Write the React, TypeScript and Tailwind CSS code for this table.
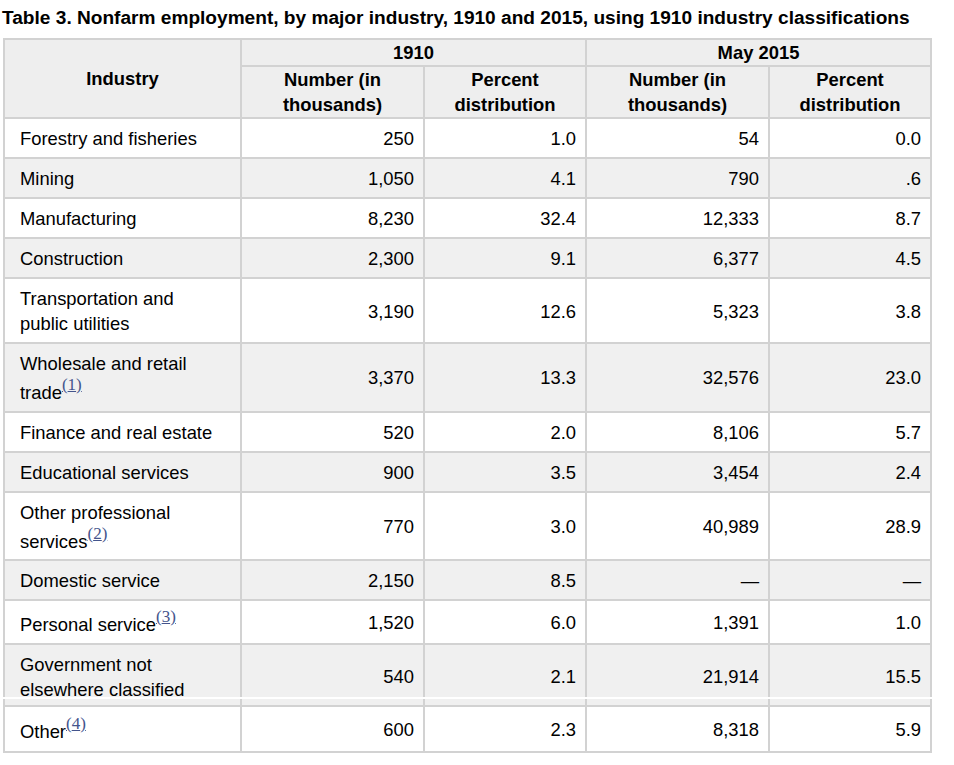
import type { ReactNode } from "react";

type Row = {
  name: ReactNode;
  n1910: string;
  p1910: string;
  n2015: string;
  p2015: string;
};

const Note = ({ n }: { n: number }) => (
  <sup
    className="text-[17px] leading-[18px] top-0 align-[0.5em] text-[#44548c] underline"
    style={{ fontFamily: '"Liberation Serif", serif' }}
  >
    ({n})
  </sup>
);

const rows: Row[] = [
  { name: "Forestry and fisheries", n1910: "250", p1910: "1.0", n2015: "54", p2015: "0.0" },
  { name: "Mining", n1910: "1,050", p1910: "4.1", n2015: "790", p2015: ".6" },
  { name: "Manufacturing", n1910: "8,230", p1910: "32.4", n2015: "12,333", p2015: "8.7" },
  { name: "Construction", n1910: "2,300", p1910: "9.1", n2015: "6,377", p2015: "4.5" },
  { name: "Transportation and public utilities", n1910: "3,190", p1910: "12.6", n2015: "5,323", p2015: "3.8" },
  {
    name: (
      <>
        Wholesale and retail trade<Note n={1} />
      </>
    ),
    n1910: "3,370",
    p1910: "13.3",
    n2015: "32,576",
    p2015: "23.0",
  },
  { name: "Finance and real estate", n1910: "520", p1910: "2.0", n2015: "8,106", p2015: "5.7" },
  { name: "Educational services", n1910: "900", p1910: "3.5", n2015: "3,454", p2015: "2.4" },
  {
    name: (
      <>
        Other professional services<Note n={2} />
      </>
    ),
    n1910: "770",
    p1910: "3.0",
    n2015: "40,989",
    p2015: "28.9",
  },
  { name: "Domestic service", n1910: "2,150", p1910: "8.5", n2015: "—", p2015: "—" },
  {
    name: (
      <>
        Personal service<Note n={3} />
      </>
    ),
    n1910: "1,520",
    p1910: "6.0",
    n2015: "1,391",
    p2015: "1.0",
  },
  { name: "Government not elsewhere classified", n1910: "540", p1910: "2.1", n2015: "21,914", p2015: "15.5" },
];

const cell = "border-2 border-[#d2d2d2] pt-[7px] pb-[6px]";
const head = "border-2 border-[#d2d2d2] p-0 text-center font-bold";
const num = `${cell} text-right pr-[9px]`;
const lastCell = "border-2 border-[#d2d2d2] pt-[8px] pb-[7px]";
const lastNum = `${lastCell} text-right pr-[9px]`;

function Cols() {
  return (
    <colgroup>
      <col className="w-[237px]" />
      <col className="w-[183px]" />
      <col className="w-[162px]" />
      <col className="w-[183px]" />
      <col className="w-[162px]" />
    </colgroup>
  );
}

export default function App() {
  return (
    <div
      className="bg-white min-h-screen text-[18.4px] leading-[25px] text-black"
      style={{ fontFamily: '"Liberation Sans", Arial, sans-serif' }}
    >
      <h1 className="font-bold text-[19.1px] pl-[2px] pt-[5px] h-[38px]">
        Table 3. Nonfarm employment, by major industry, 1910 and 2015, using 1910 industry classifications
      </h1>

      <div className="ml-[3px] w-[929px]">
        <div className="h-[659px] overflow-hidden">
          <table className="table-fixed border-collapse w-[929px]">
            <Cols />
            <thead className="bg-[#eeeeee]">
              <tr>
                <th rowSpan={2} className={`${head} align-middle`}>
                  Industry
                </th>
                <th colSpan={2} className={head}>
                  1910
                </th>
                <th colSpan={2} className={head}>
                  May 2015
                </th>
              </tr>
              <tr>
                <th className={head}>
                  Number (in
                  <br />
                  thousands)
                </th>
                <th className={head}>
                  Percent
                  <br />
                  distribution
                </th>
                <th className={head}>
                  Number (in
                  <br />
                  thousands)
                </th>
                <th className={head}>
                  Percent
                  <br />
                  distribution
                </th>
              </tr>
            </thead>
            <tbody>
              {rows.map((r, i) => (
                <tr key={i} className={i % 2 === 1 ? "bg-[#f0f0f0]" : "bg-white"}>
                  <td className={`${cell} pl-[15px] pr-[16px]`}>{r.name}</td>
                  <td className={num}>{r.n1910}</td>
                  <td className={num}>{r.p1910}</td>
                  <td className={num}>{r.n2015}</td>
                  <td className={num}>{r.p2015}</td>
                </tr>
              ))}
            </tbody>
          </table>
        </div>

        <table className="table-fixed border-collapse w-[929px] mt-[2px]">
          <Cols />
          <tbody>
            <tr className="bg-[#f0f0f0] h-[7px]">
              {[0, 1, 2, 3, 4].map((k) => (
                <td key={k} className="border-x-2 border-[#d2d2d2] p-0 h-[7px]" />
              ))}
            </tr>
            <tr className="bg-white">
              <td className={`${lastCell} pl-[15px] pr-[16px]`}>
                Other<Note n={4} />
              </td>
              <td className={lastNum}>600</td>
              <td className={lastNum}>2.3</td>
              <td className={lastNum}>8,318</td>
              <td className={lastNum}>5.9</td>
            </tr>
          </tbody>
        </table>
      </div>
    </div>
  );
}
